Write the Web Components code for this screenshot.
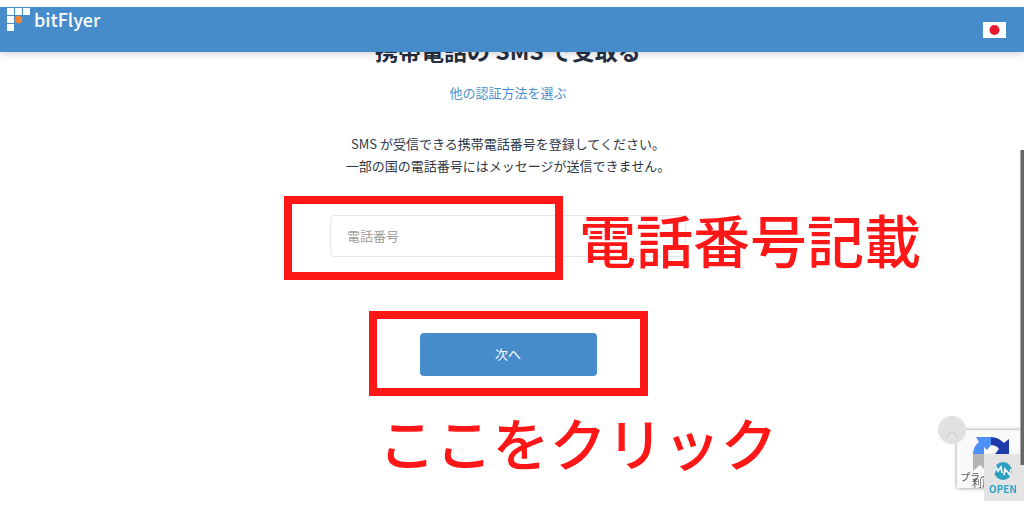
<!DOCTYPE html>
<html lang="ja">

<head>
    <meta charset="UTF-8">
    <meta name="viewport" content="width=device-width, initial-scale=1.0">
    <title>bitFlyer</title>
    <style>
        body {
            margin: 0;
            background: #fff;
            color: #2d3748;
            font: 13px/22px "Noto Sans CJK JP", sans-serif;
        }
    </style>
</head>

<body>

    <site-header></site-header>

    <sms-form>
        <span slot="titulo">携帯電話の SMS で受取る</span>
        <span slot="link">他の認証方法を選ぶ</span>
        <span slot="texto">SMS が受信できる携帯電話番号を登録してください。<br>一部の国の電話番号にはメッセージが送信できません。</span>
        <phone-field label="電話番号">
            <red-note slot="nota">電話番号記載</red-note>
        </phone-field>
        <next-button>
            次へ
            <red-note slot="nota">ここをクリック</red-note>
        </next-button>
    </sms-form>

    <corner-widgets></corner-widgets>

</body>

<script>

    // attaches an open shadow root with the given markup
    class BaseElement extends HTMLElement {
        constructor() {
            super()
            const template = document.createElement('template');
            template.innerHTML = this.render();
            this.attachShadow({ mode: 'open' }).appendChild(template.content.cloneNode(true))
        }
    }


    class SiteHeader extends BaseElement {
        render() {
            return `
            <style>
                :host {
                    display: block;
                    position: relative;
                    z-index: 1;
                    padding-top: 7px;
                    background: #fff;
                    box-shadow: 0 1px 8px rgba(0, 0, 0, .22);
                }
                header {
                    display: flex;
                    justify-content: space-between;
                    align-items: flex-start;
                    height: 45px;
                    padding: 0 18px 0 6px;
                    box-sizing: border-box;
                    background: #468ccb;
                }
                .logo {
                    display: flex;
                    align-items: center;
                    gap: 4px;
                    color: #fff;
                    font-size: 18px;
                    line-height: 24px;
                    font-weight: 500;
                    text-decoration: none;
                }
                button {
                    display: flex;
                    margin-top: 15px;
                    padding: 0;
                    border: 0;
                    background: none;
                }
            </style>
            <header>
                <a class="logo" href="#">
                    <svg width="24" height="24" viewBox="0 0 24 24" aria-hidden="true">
                        <g fill="#fff">
                            <rect x="1" y="1" width="7" height="7"/>
                            <rect x="9" y="1" width="7" height="7"/>
                            <rect x="17" y="1" width="7" height="7"/>
                            <rect x="1" y="9" width="7" height="7"/>
                            <rect x="1" y="17" width="7" height="7"/>
                        </g>
                        <circle cx="12.500" cy="12.500" r="3.700" fill="#f58232"/>
                    </svg>
                    <span>bitFlyer</span>
                </a>
                <button aria-label="日本語">
                    <svg width="23" height="16" viewBox="0 0 23 16">
                        <rect width="23" height="16" fill="#fff"/>
                        <circle cx="11.500" cy="8" r="5" fill="#e5192b"/>
                    </svg>
                </button>
            </header>
            `
        }
    }


    class SmsForm extends BaseElement {
        render() {
            return `
            <style>
                :host { display: block; padding-right: 8px; }
                form {
                    display: flex;
                    flex-direction: column;
                    align-items: center;
                    text-align: center;
                }
                h1 {
                    margin: -18px 0 0;
                    font-size: 23px;
                    line-height: 32px;
                    font-weight: 700;
                    color: #252f42;
                }
                a {
                    margin-top: 16px;
                    color: #4a90cc;
                    text-decoration: none;
                }
                p { margin: 29px 0 38px; }
            </style>
            <form>
                <h1><slot name="titulo"></slot></h1>
                <a href="#"><slot name="link"></slot></a>
                <p><slot name="texto"></slot></p>
                <slot></slot>
            </form>
            `
        }
    }


    class PhoneField extends BaseElement {
        render() {
            return `
            <style>
                :host { display: block; position: relative; width: 356px; max-width: 100%; }
                input {
                    display: block;
                    width: 100%;
                    height: 42px;
                    box-sizing: border-box;
                    padding: 0 16px 2px;
                    border: 1px solid #e8e8e8;
                    border-radius: 4px;
                    font: inherit;
                    background: #fff;
                }
                input::placeholder { color: #a0a0a0; opacity: 1; }
                .moldura {
                    position: absolute;
                    inset: -19px 123px -23px -46px;
                    border: 8px solid #ff1616;
                    pointer-events: none;
                }
                slot { position: absolute; display: block; left: 249px; top: -19px; }
            </style>
            <input type="tel">
            <div class="moldura"></div>
            <slot name="nota"></slot>
            `
        }

        connectedCallback() {
            const input = this.shadowRoot.querySelector('input');
            input.placeholder = this.getAttribute('label')
            input.setAttribute('aria-label', this.getAttribute('label'))
        }
    }


    class NextButton extends BaseElement {
        render() {
            return `
            <style>
                :host {
                    display: block;
                    width: 279px;
                    margin-top: 54px;
                }
                .moldura {
                    padding: 14px 43px 12px;
                    border: 8px solid #ff1616;
                }
                button {
                    display: block;
                    width: 100%;
                    height: 43px;
                    padding: 0 0 2px;
                    border: 0;
                    border-radius: 4px;
                    background: #468ccb;
                    color: #fff;
                    font: inherit;
                }
                .nota { display: block; margin: 3px 0 0 10px; text-align: left; }
            </style>
            <div class="moldura">
                <button type="button"><slot></slot></button>
            </div>
            <slot class="nota" name="nota"></slot>
            `
        }
    }


    class RedNote extends BaseElement {
        render() {
            return `
            <style>
                :host {
                    display: block;
                    color: #ff1616;
                    font-size: 57px;
                    line-height: 84px;
                    font-weight: 500;
                    white-space: nowrap;
                }
            </style>
            <slot></slot>
            `
        }
    }


    // scroll-to-top button, reCAPTCHA badge, OPEN tab and scrollbar thumb
    class CornerWidgets extends BaseElement {
        render() {
            return `
            <style>
                :host { display: block; }
                .recaptcha {
                    position: fixed;
                    right: 0;
                    top: 430px;
                    width: 67px;
                    height: 58px;
                    background: #f9f9f9;
                    box-shadow: 0 0 4px #888;
                    font-size: 10px;
                    line-height: 12px;
                    color: #555;
                }
                .recaptcha svg { position: absolute; left: 16px; top: 6px; }
                .recaptcha span { position: absolute; left: 3px; top: 41px; }
                .recaptcha span + span { left: 15px; top: 47px; }
                .topo {
                    position: fixed;
                    right: 58px;
                    top: 416px;
                    width: 28px;
                    height: 28px;
                    padding: 0;
                    border: 0;
                    border-radius: 50%;
                    background: #e1e1e1;
                }
                .topo svg { display: block; }
                .abrir {
                    position: fixed;
                    right: 0;
                    top: 454px;
                    width: 40px;
                    height: 47px;
                    display: flex;
                    flex-direction: column;
                    align-items: center;
                    box-sizing: border-box;
                    padding: 7px 2px 0 0;
                    border: 0;
                    background: #e4e4e4;
                    color: #2d9fc0;
                    font: 700 10px/16px "Noto Sans CJK JP", sans-serif;
                }
                .barra {
                    position: fixed;
                    right: 0;
                    top: 150px;
                    width: 4px;
                    height: 315px;
                    background: #666;
                    border-left: 1px solid #aaa;
                    box-sizing: border-box;
                }
            </style>
            <div class="recaptcha">
                <svg width="36" height="38" viewBox="0 0 36 38" aria-hidden="true">
                    <path fill="#b5b5b5" d="M0 18H11C11 24 13 27 16 30L12 34L7 29L0 35Z"/>
                    <path fill="#4d8ff5" d="M18 1V9L14 14L11 11V18H0C0 13 2 9 6 6L3 1Z"/>
                    <path fill="#1c3aa9" d="M18 1C23 1 27 3 31 7L36 3V18H22L26 13C24 10 21 9 18 9Z"/>
                </svg>
                <span>プライ</span>
                <span>利用</span>
            </div>
            <button class="topo" aria-label="ページトップへ">
                <svg width="28" height="28" viewBox="0 0 28 28"><path d="M8 22L14 15L20 22" fill="none" stroke="#c4c4c4"/></svg>
            </button>
            <button class="abrir">
                <svg width="20" height="20" viewBox="0 0 20 20" aria-hidden="true">
                    <circle cx="10" cy="10" r="9" fill="#2d9fc0"/>
                    <path d="M1 12L3 6L5 10L8 6L9 12M11 14L12 8L17 14L18 8" fill="none" stroke="#f2f2f2" stroke-width="1.800"/>
                </svg>
                OPEN
            </button>
            <div class="barra"></div>
            `
        }
    }


    customElements.define('site-header', SiteHeader)
    customElements.define('sms-form', SmsForm)
    customElements.define('phone-field', PhoneField)
    customElements.define('next-button', NextButton)
    customElements.define('red-note', RedNote)
    customElements.define('corner-widgets', CornerWidgets)

</script>

</html>
